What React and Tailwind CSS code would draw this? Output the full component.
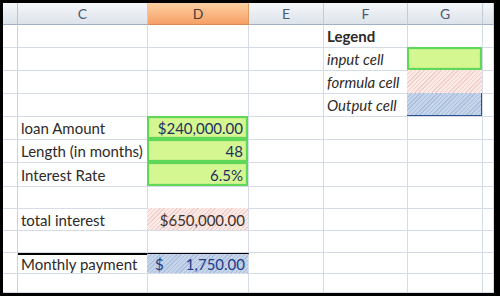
import React from 'react';

// column widths: row header, C, D, E, F, G, H (partial)
const rowHeights = [23, 23, 23, 23, 23, 23, 24, 22, 22, 22, 21, 19];

const green = 'bg-[#d4f792] border-2 border-[#5fd85a] shadow-[inset_0_0_0_1px_#c8f08a]';
const pink = 'bg-[repeating-linear-gradient(135deg,#f2d0ca_0px,#f2d0ca_1px,#fbeae7_1px,#fbeae7_3px)]';
const blue = 'bg-[repeating-linear-gradient(135deg,#abc0de_0px,#abc0de_1px,#c6d5ea_1px,#c6d5ea_3px)]';

const cells = {
  0: { F: { text: 'Legend', cls: 'font-bold' } },
  1: { F: { text: 'input cell', cls: 'italic' }, G: { box: green } },
  2: { F: { text: 'formula cell', cls: 'italic' }, G: { box: pink } },
  3: { F: { text: 'Output cell', cls: 'italic' }, G: { box: `${blue} border-r border-b border-[#24508f]` } },
  4: { C: { text: 'loan Amount' }, D: { text: '$240,000.00', box: green, right: true, cls: 'text-[#1e2f5e]' } },
  5: { C: { text: 'Length (in months)' }, D: { text: '48', box: green, right: true, cls: 'text-[#1e2f5e]' } },
  6: { C: { text: 'Interest Rate' }, D: { text: '6.5%', box: green, right: true, cls: 'text-[#1e2f5e]' } },
  8: { C: { text: 'total interest' }, D: { text: '$650,000.00', box: pink, right: true, cls: 'text-[#3b302b]' } },
  10: { C: { text: 'Monthly payment' }, D: { text: '1,750.00', dollar: true, box: blue, right: true, cls: 'text-[#1f3a86]' } },
};

function Cell({ data, col, row }) {
  const line = 'border-r border-b border-[#d5dce8]';
  const thickTop = row === 10 && (col === 'C' || col === 'D');
  if (!data) {
    return <div className={`${line} ${thickTop ? 'border-t-2 border-t-black' : ''}`} />;
  }
  return (
    <div className={`${line} relative ${thickTop ? 'border-t-2 border-t-black' : ''}`}>
      <div
        className={`absolute -left-[1px] -top-[1px] right-0 bottom-0 flex items-center pt-[2px] ${
          data.right ? 'justify-end pr-[3px] pl-[3px]' : 'pl-[4px]'
        } ${data.box || ''} ${data.cls || ''}`}
      >
        {data.dollar && <span className="mr-auto pl-[5px]">$</span>}
        {data.text}
      </div>
    </div>
  );
}

export default function App() {
  const cols = ['C', 'D', 'E', 'F', 'G', 'H'];
  return (
    <div className="w-[500px] h-[297px] bg-white font-['Lato','Liberation_Sans',sans-serif] text-[15px] text-[#2e2a27] overflow-hidden">
      <div className="w-[500px] h-[296px] border-l-[3px] border-t-[3px] border-r-[6px] border-b-[3px] border-black overflow-hidden">
        <div className="grid grid-cols-[15px_130px_101px_75px_84px_75px_11px]">
          {/* header row */}
          <div className="h-[22px] border-r border-b border-r-[#b8c4d4] border-b-[#9fb0c6] bg-gradient-to-b from-[#f5f7fa] to-[#dde3eb]" />
          {cols.map((c) => (
            <div
              key={c}
              className={`h-[22px] flex items-center justify-center text-[14px] border-r border-b ${
                c === 'D'
                  ? 'bg-gradient-to-b from-[#fdd0a2] to-[#f5a066] border-r-[#e39a62] border-b-[#d98a52] text-[#4a3a30]'
                  : 'bg-gradient-to-b from-[#f5f7fa] to-[#dde3eb] border-r-[#c3cdda] border-b-[#9fb0c6] text-[#4b5a70]'
              }`}
            >
              {c === 'H' ? '' : c}
            </div>
          ))}
          {rowHeights.map((h, r) => (
            <React.Fragment key={r}>
              <div style={{ height: h }} className="border-r border-b border-r-[#c9d2df] border-b-[#d5dce8] bg-white" />
              {cols.map((c) => (
                <Cell key={c} col={c} row={r} data={cells[r] && cells[r][c]} />
              ))}
            </React.Fragment>
          ))}
        </div>
      </div>
    </div>
  );
}
